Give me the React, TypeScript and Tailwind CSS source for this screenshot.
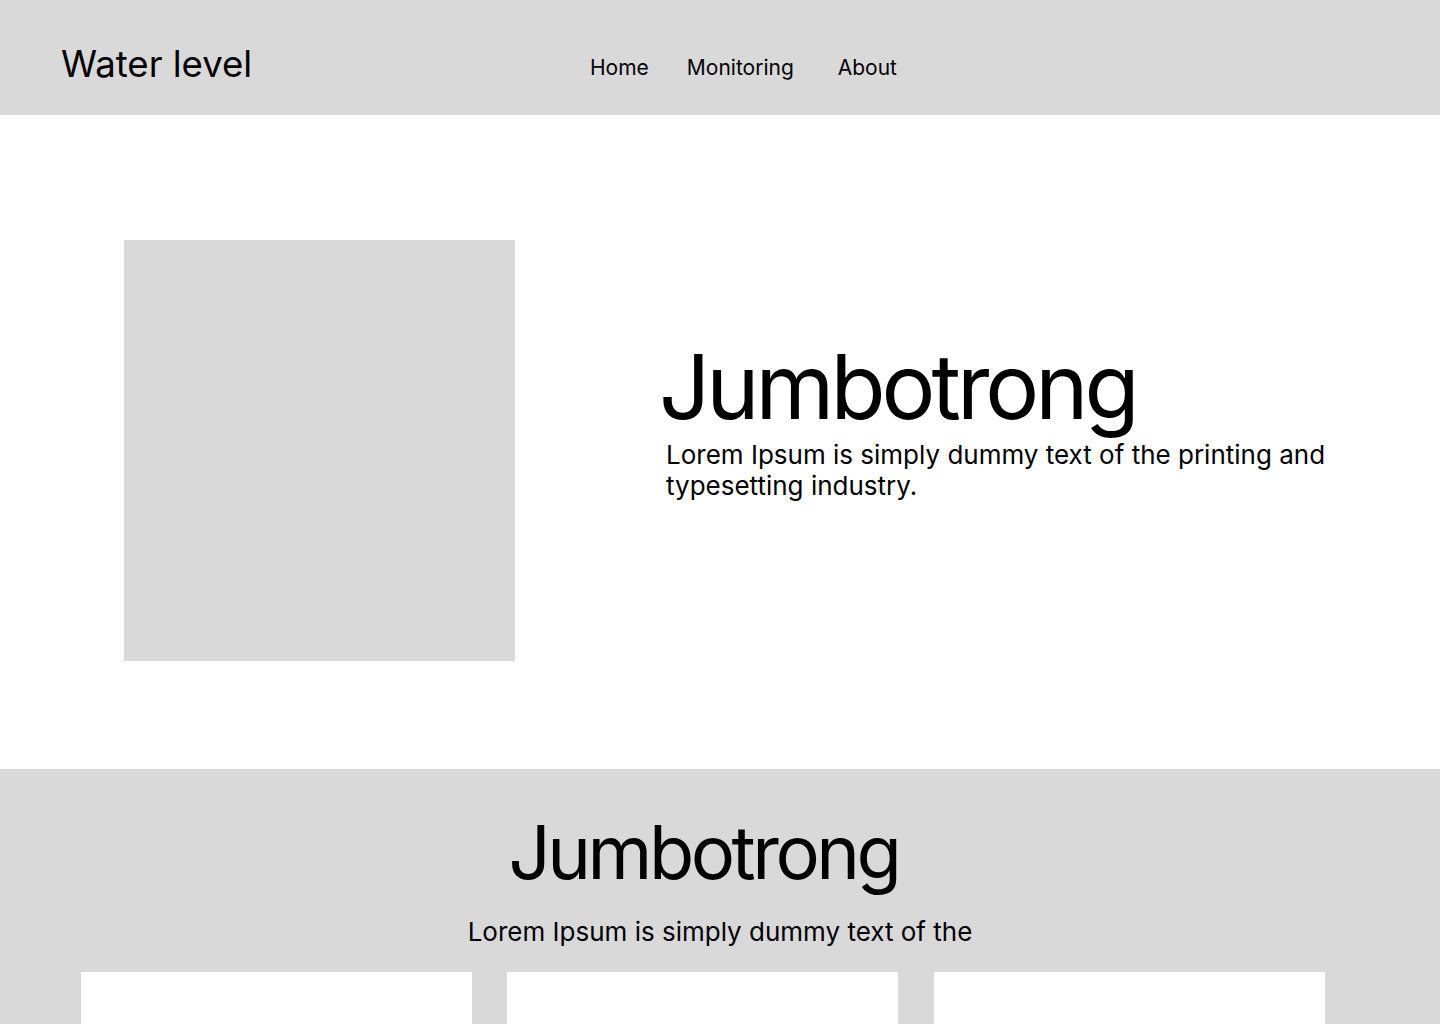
export default function App() {
  return (
    <div className="min-h-[1024px] bg-white text-black font-['Inter',sans-serif]">
      <header className="h-[115px] bg-[#d9d9d9] flex items-center">
        <div className="w-[528px] pl-[61px] text-[36.6px] leading-none pt-[13px]">Water level</div>
        <nav className="flex items-center text-[21px] pt-[20px]">
          <a className="ml-[62px]">Home</a>
          <a className="ml-[38px]">Monitoring</a>
          <a className="ml-[44px]">About</a>
        </nav>
      </header>

      <section className="h-[654px] flex items-start pt-[125px]">
        <div className="ml-[124px] w-[391px] h-[421px] bg-[#d9d9d9]" />
        <div className="ml-[144px] pt-[102px]">
          <h1 className="text-[90px] leading-none tracking-[-4px]">Jumbotrong</h1>
          <p className="ml-[7px] mt-[7px] w-[700px] text-[26px] leading-[31px]">
            Lorem Ipsum is simply dummy text of the printing and typesetting industry.
          </p>
        </div>
      </section>

      <section className="bg-[#d9d9d9] h-[255px] flex flex-col items-center pt-[46px]">
        <h2 className="mr-[33px] text-[74px] leading-none tracking-[-3.5px]">Jumbotrong</h2>
        <p className="mt-[27px] text-[26px] leading-[31px]">Lorem Ipsum is simply dummy text of the</p>
        <div className="mt-[25px] self-stretch flex pl-[81px]">
          <div className="w-[391px] h-[60px] bg-white" />
          <div className="ml-[35px] w-[391px] h-[60px] bg-white" />
          <div className="ml-[36px] w-[391px] h-[60px] bg-white" />
        </div>
      </section>
    </div>
  )
}
